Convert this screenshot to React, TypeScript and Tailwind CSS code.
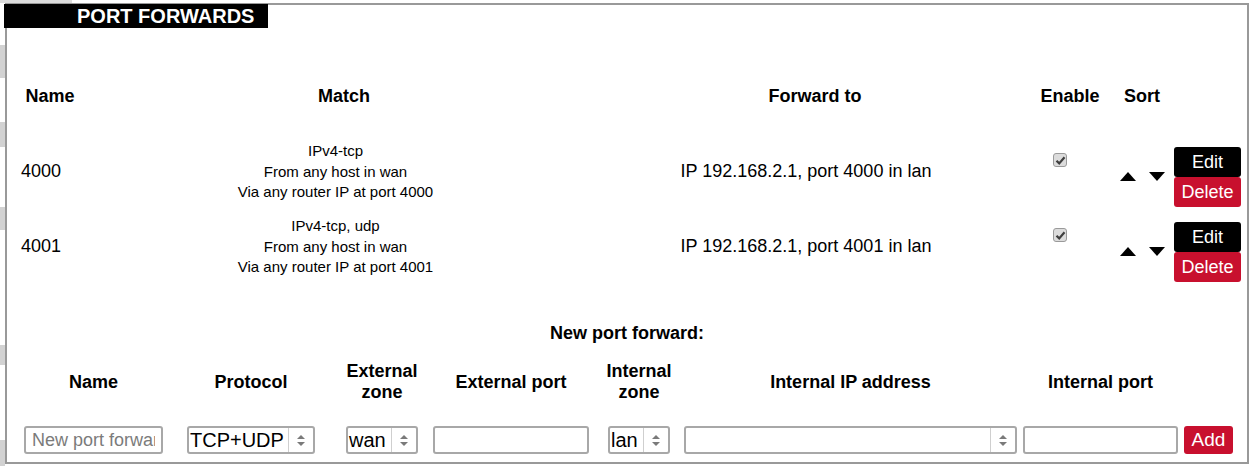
import React from "react";

const rules = [
  { name: "4000", proto: "IPv4-tcp", port: "4000" },
  { name: "4001", proto: "IPv4-tcp, udp", port: "4001" },
];

const Check = () => (
  <div className="flex h-[14px] w-[14px] items-center justify-center rounded-[3px] border border-[#9a9a9a] bg-[#dcdcdc]">
    <svg width="11" height="11" viewBox="0 0 11 11">
      <path d="M1.5 5.8 L4.2 8.4 L9.5 2.2" fill="none" stroke="#3f3f3f" strokeWidth="2.2" />
    </svg>
  </div>
);

const Spinner = () => (
  <div className="flex h-full w-[25px] items-center justify-center border-l border-[#cfcfcf]">
    <svg width="10" height="13" viewBox="0 0 10 13">
      <polygon points="1,5 5,1 9,5" fill="#7a7a7a" />
      <polygon points="1,8 9,8 5,12" fill="#7a7a7a" />
    </svg>
  </div>
);

const Select = ({ value, w }: { value: string; w: string }) => (
  <div className={`flex h-[28px] ${w} items-center rounded-[3px] border-2 border-[#a8a8a8] bg-white`}>
    <span className="flex-1 overflow-hidden whitespace-nowrap pl-[1px] text-[20px] leading-[24px] text-black">
      {value}
    </span>
    <Spinner />
  </div>
);

const TextBox = ({ w, placeholder }: { w: string; placeholder?: string }) => (
  <input
    readOnly
    placeholder={placeholder}
    className={`h-[28px] ${w} rounded-[3px] border-2 border-[#a8a8a8] bg-white px-[6px] text-[18px] leading-[22px] outline-none placeholder:text-[#7b7b7b]`}
  />
);

const Head = ({ children }: { children: React.ReactNode }) => (
  <div className="flex h-[42px] items-center justify-center whitespace-nowrap text-center text-[18px] font-bold leading-[21px]">
    {children}
  </div>
);

export default function App() {
  return (
    <div className="h-[466px] w-[1251px] overflow-hidden bg-white font-['Liberation_Sans',Arial,sans-serif] text-black">
      <div className="h-[3px] w-[72px] bg-[#dcdcdc]" />
      <div className="flex">
        {/* left page strip behind the panel */}
        <div className="flex w-[5px] flex-col">
          <div className="h-[42px]" />
          <div className="h-[33px] bg-[#d2d2d2]" />
          <div className="h-[44px]" />
          <div className="h-[25px] bg-[#d2d2d2]" />
          <div className="h-[60px]" />
          <div className="h-[23px] bg-[#d2d2d2]" />
          <div className="h-[115px]" />
          <div className="h-[20px] bg-[#d2d2d2]" />
          <div className="h-[75px]" />
          <div className="h-[26px] bg-[#d2d2d2]" />
        </div>

        <div className="h-[461px] w-[1244px] border-2 border-[#999]">
          <div className="-ml-[3px] -mt-[1px] h-[24px] w-[264px] bg-black pl-[73px] text-[20px] font-bold leading-[24px] text-white">
            PORT FORWARDS
          </div>

          {/* existing rules */}
          <div className="ml-[5px] mt-[56px]">
            <div className="grid h-[24px] grid-cols-[76px_512px_430px_80px_64px_67px] items-center text-center text-[18px] font-bold leading-[24px]">
              <div>Name</div>
              <div>Match</div>
              <div>Forward to</div>
              <div>Enable</div>
              <div>Sort</div>
              <div />
            </div>

            <div className="mt-[33px] flex flex-col gap-[14px]">
              {rules.map((r) => (
                <div
                  key={r.name}
                  className="grid h-[61px] grid-cols-[76px_512px_430px_80px_64px_67px]"
                >
                  <div className="flex items-center pb-[6px] pl-[9px] text-[18px] leading-[22px]">
                    {r.name}
                  </div>
                  <div className="flex flex-col items-center justify-center pb-[4px] pr-[17px] text-center text-[15px] leading-[20.5px]">
                    <span>{r.proto}</span>
                    <span>From any host in wan</span>
                    <span>Via any router IP at port {r.port}</span>
                  </div>
                  <div className="flex items-center justify-center pb-[6px] pr-[18px] text-[18px] leading-[22px]">
                    IP 192.168.2.1, port {r.port} in lan
                  </div>
                  <div className="flex justify-center pr-[20px] pt-[12px]">
                    <Check />
                  </div>
                  <div className="flex gap-[13px] pl-[10px] pt-[31px]">
                    <svg width="16" height="9" viewBox="0 0 16 9">
                      <polygon points="0,9 8,0 16,9" fill="#000" />
                    </svg>
                    <svg width="16" height="9" viewBox="0 0 16 9">
                      <polygon points="0,0 16,0 8,9" fill="#000" />
                    </svg>
                  </div>
                  <div className="flex flex-col pt-[6px] text-[18px] leading-[30px] text-white">
                    <div className="h-[30px] rounded-[3px] bg-black text-center">Edit</div>
                    <div className="h-[30px] rounded-[3px] bg-[#c8102e] text-center">Delete</div>
                  </div>
                </div>
              ))}
            </div>
          </div>

          {/* new rule form */}
          <div className="mt-[44px] text-center text-[18px] font-bold leading-[24px]">
            New port forward:
          </div>

          <div className="mt-[16px] flex pl-[17px]">
            <div className="flex w-[139px] flex-col gap-[23px]">
              <Head>Name</Head>
              <TextBox w="w-[139px]" placeholder="New port forward" />
            </div>
            <div className="ml-[24px] flex w-[128px] flex-col gap-[23px]">
              <Head>Protocol</Head>
              <Select w="w-[128px]" value="TCP+UDP" />
            </div>
            <div className="ml-[31px] flex w-[72px] flex-col gap-[23px]">
              <Head>
                External
                <br />
                zone
              </Head>
              <Select w="w-[72px]" value="wan" />
            </div>
            <div className="ml-[15px] flex w-[156px] flex-col gap-[23px]">
              <Head>External port</Head>
              <TextBox w="w-[156px]" />
            </div>
            <div className="ml-[19px] flex w-[62px] flex-col gap-[23px]">
              <Head>
                Internal
                <br />
                zone
              </Head>
              <Select w="w-[62px]" value="lan" />
            </div>
            <div className="ml-[14px] flex w-[333px] flex-col gap-[23px]">
              <Head>Internal IP address</Head>
              <Select w="w-[333px]" value="" />
            </div>
            <div className="ml-[6px] flex w-[155px] flex-col gap-[23px]">
              <Head>Internal port</Head>
              <TextBox w="w-[155px]" />
            </div>
            <div className="ml-[6px] flex w-[49px] flex-col gap-[23px]">
              <Head>{""}</Head>
              <div className="h-[28px] w-[49px] rounded-[3px] bg-[#c8102e] text-center text-[19px] leading-[28px] text-white">
                Add
              </div>
            </div>
          </div>
        </div>
      </div>
    </div>
  );
}
